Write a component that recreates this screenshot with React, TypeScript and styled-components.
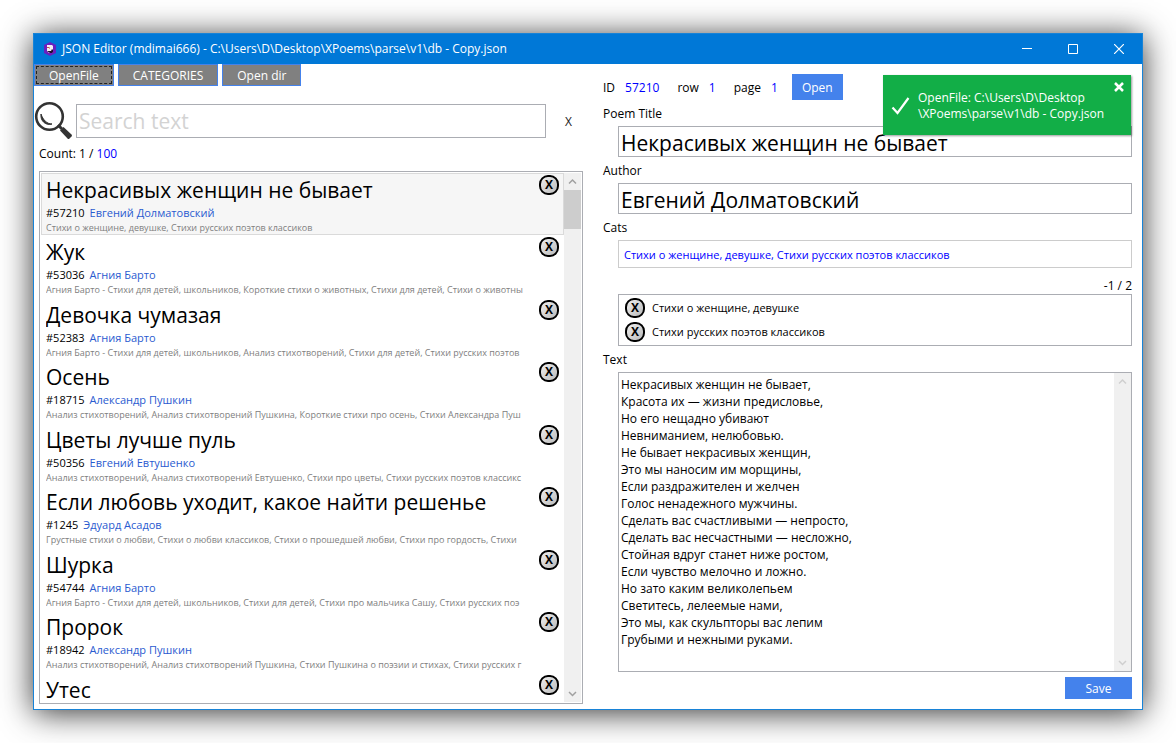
import React from 'react';
import styled, { createGlobalStyle } from 'styled-components';

const GlobalStyle = createGlobalStyle`
  *, *::before, *::after { box-sizing: border-box; }
  body { margin: 0; background: #fff; }
  body, button, input, textarea { font-family: "Open Sans", "Noto Sans", sans-serif; font-size: 12px; }
  button { padding: 0; cursor: pointer; }
`;

const Desktop = styled.div`
  display: flex;
  height: 100vh;
  min-height: 480px;
  padding: 33px;
`;

const Window = styled.main`
  position: relative;
  display: flex;
  flex: 1;
  flex-direction: column;
  min-width: 0;
  border: 1px solid #1883d7;
  background: #fff;
  color: #000;
  line-height: 16px;
  box-shadow: 0 3px 30px rgba(0, 0, 0, 0.8);
`;

const TitleBar = styled.header`
  display: flex;
  flex: none;
  align-items: center;
  height: 30px;
  padding-left: 9px;
  background: #0078d7;
  color: #fff;
`;

const WindowTitle = styled.h1`
  flex: 1;
  margin: 0 0 0 5px;
  font-size: 12px;
  font-weight: 400;
`;

const CaptionButton = styled.button`
  display: flex;
  align-items: center;
  justify-content: center;
  width: 46px;
  height: 30px;
  border: 0;
  background: none;
`;

const Content = styled.div`
  display: flex;
  flex: 1;
  gap: 20px;
  min-height: 0;
  padding-right: 10px;
`;

const LeftPane = styled.section`
  display: flex;
  flex: 549 1 0;
  flex-direction: column;
  min-width: 0;
  padding-bottom: 5px;
`;

const RightPane = styled.section`
  display: flex;
  flex: 529 1 0;
  flex-direction: column;
  min-width: 0;
  padding: 10px 0;
`;

const Toolbar = styled.div`
  display: flex;
  gap: 4px;
`;

const ToolButton = styled.button<{ $focused?: boolean }>`
  height: 22px;
  padding: 0 14px;
  border: 1px solid #4482ec;
  background: #808080;
  color: #fff;
  outline: ${(p) => (p.$focused ? '1px dashed #222' : 'none')};
  outline-offset: -3px;
`;

const SearchRow = styled.div`
  display: flex;
  align-items: center;
  gap: 2px;
  margin-top: 15px;
`;

const SearchInput = styled.input`
  flex: 1;
  min-width: 0;
  height: 34px;
  padding: 0 2px;
  border: 1px solid #abadb3;
  font-size: 21px;
  &::placeholder { color: #d3d3d3; opacity: 1; }
`;

const ClearButton = styled.button`
  width: 35px;
  height: 34px;
  padding-left: 6px;
  border: 0;
  background: none;
  color: #222;
`;

const Count = styled.p`
  margin: 5px 0 9px 5px;
`;

const Blue = styled.span`
  color: #0000ff;
`;

const ListFrame = styled.div`
  display: flex;
  flex: 1;
  min-height: 0;
  margin-left: 5px;
  padding: 1px;
  border: 1px solid #abadb3;
`;

const PoemList = styled.ul`
  flex: 1;
  min-width: 0;
  margin: 0;
  padding: 0;
  overflow: hidden;
  list-style: none;
`;

const PoemItem = styled.li<{ $selected?: boolean }>`
  display: flex;
  height: 62px;
  padding: 1px 4px;
  border: 1px solid ${(p) => (p.$selected ? '#dadada' : 'transparent')};
  background: ${(p) => (p.$selected ? '#f6f6f6' : 'transparent')};
  &:nth-child(even) { height: 63px; }
`;

const PoemInfo = styled.div`
  flex: 1;
  min-width: 0;
  overflow: hidden;
  white-space: nowrap;
`;

const PoemName = styled.div`
  font-size: 21px;
  line-height: 30px;
`;

const PoemMeta = styled.div`
  display: flex;
  gap: 5px;
  font-size: 11px;
  line-height: 16px;
`;

const AuthorName = styled.span`
  color: #2a5bd0;
`;

const PoemCats = styled.div`
  color: #808080;
  font-size: 9px;
  line-height: 13px;
`;

const RoundButton = styled.button`
  flex: none;
  width: 20px;
  height: 20px;
  border: 2px solid #000;
  border-radius: 9px;
  background: linear-gradient(135deg, #eee, #bbb);
  color: #000;
  font-weight: 700;
  line-height: 16px;
`;

const ScrollTrack = styled.div`
  display: flex;
  flex: none;
  flex-direction: column;
  justify-content: space-between;
  width: 17px;
  background: #f0f0f0;
`;

const ScrollThumb = styled.div`
  height: 39px;
  margin-bottom: auto;
  background: #cdcdcd;
`;

const InfoRow = styled.div`
  display: flex;
  align-items: center;
  height: 26px;
`;

const Pair = styled.span`
  display: flex;
  gap: 10px;
  margin-right: 18px;
  padding-top: 2px;
`;

const PrimaryButton = styled.button<{ $width: number; $height: number }>`
  width: ${(p) => p.$width}px;
  height: ${(p) => p.$height}px;
  border: 0;
  background: #4482ec;
  color: #fff;
`;

const InfoButton = styled(PrimaryButton)`
  margin-left: -4px;
`;

const Label = styled.label`
  display: block;
  margin: 6px 0 4px;
`;

const BigInput = styled.input`
  flex: none;
  height: 31px;
  margin: 0 0 0 15px;
  padding: 2px 2px 0;
  border: 1px solid #abadb3;
  font-size: 21px;
`;

const CatsInput = styled.input`
  flex: none;
  height: 28px;
  margin: 0 0 0 15px;
  padding: 0 5px;
  border: 1px solid #ccc;
  color: #0000ff;
  font-size: 11px;
`;

const Position = styled.p`
  margin: 10px 0 0;
  text-align: right;
`;

const CatList = styled.ul`
  flex: none;
  margin: 0 0 0 15px;
  padding: 1px 6px;
  border: 1px solid #abadb3;
  font-size: 11px;
  list-style: none;
`;

const CatItem = styled.li`
  display: flex;
  align-items: center;
  gap: 7px;
  height: 24px;
`;

const TextFrame = styled.div`
  display: flex;
  flex: 1;
  min-height: 0;
  margin: 0 0 5px 15px;
  border: 1px solid #abadb3;
`;

const PoemText = styled.textarea`
  flex: 1;
  min-width: 0;
  margin: 0;
  padding: 3px 2px;
  overflow: hidden;
  border: 0;
  line-height: 17px;
  resize: none;
`;

const Footer = styled.div`
  display: flex;
  flex: none;
  justify-content: flex-end;
`;

const Toast = styled.aside`
  position: absolute;
  top: 41px;
  right: 11px;
  display: flex;
  align-items: center;
  width: 248px;
  height: 60px;
  padding: 2px 0 0 8px;
  background: #12ae47;
  color: #fff;
  box-shadow: 1px 1px 2px rgba(0, 0, 0, 0.4);
`;

const ToastText = styled.p`
  margin: 0 0 0 8px;
`;

const ToastClose = styled.button`
  position: absolute;
  top: 7px;
  right: 7px;
  display: flex;
  border: 0;
  background: none;
`;

const AppIcon = () => (
  <svg width="14" height="14" viewBox="0 0 14 14" aria-hidden="true">
    <path d="M7 0l6 3v8l-6 3-6-3V3z" fill="#6a1fc0" />
    <path d="M4 3h5l1 1v5l-1 2H6L4 9z" fill="#f4eef4" />
    <path d="M9 7l1 1v2l-1 1H7l-3-2h4z" fill="#1c0b30" />
    <path d="M4 5h2v1H4z" fill="#c84a5a" />
    <path d="M6 5h1v2H6z" fill="#d9a890" />
  </svg>
);

const Magnifier = () => (
  <svg width="40" height="40" viewBox="0 0 40 40" aria-hidden="true">
    <circle cx="15.500" cy="15.500" r="13.300" fill="none" stroke="#333" strokeWidth="2.600" />
    <path d="M7 13c-1 7 5 12 11 10-5 0-9-4-11-10z" fill="#333" stroke="#333" strokeWidth="1" />
    <path d="M24 24l4 4" stroke="#333" strokeWidth="3" />
    <path d="M26 29.500l3.500-3.500 8 7.500q1 1 0 2l-2 2q-1 1-2 0z" fill="#333" />
  </svg>
);

const ScrollArrow = ({ down, color }: { down?: boolean; color: string }) => (
  <svg width="17" height="17" viewBox="0 0 17 17" aria-hidden="true">
    <path d={down ? 'M5 7l3.500 3.500L12 7' : 'M5 10.500L8.500 7l3.500 3.500'} fill="none" stroke={color} strokeWidth="1.500" />
  </svg>
);

const poems = [
  { id: 57210, title: 'Некрасивых женщин не бывает', author: 'Евгений Долматовский', cats: 'Стихи о женщине, девушке, Стихи русских поэтов классиков' },
  { id: 53036, title: 'Жук', author: 'Агния Барто', cats: 'Агния Барто - Стихи для детей, школьников, Короткие стихи о животных, Стихи для детей, Стихи о животны' },
  { id: 52383, title: 'Девочка чумазая', author: 'Агния Барто', cats: 'Агния Барто - Стихи для детей, школьников, Анализ стихотворений, Стихи для детей, Стихи русских поэтов' },
  { id: 18715, title: 'Осень', author: 'Александр Пушкин', cats: 'Анализ стихотворений, Анализ стихотворений Пушкина, Короткие стихи про осень, Стихи Александра Пуш' },
  { id: 50356, title: 'Цветы лучше пуль', author: 'Евгений Евтушенко', cats: 'Анализ стихотворений, Анализ стихотворений Евтушенко, Стихи про цветы, Стихи русских поэтов классикс' },
  { id: 1245, title: 'Если любовь уходит, какое найти решенье', author: 'Эдуард Асадов', cats: 'Грустные стихи о любви, Стихи о любви классиков, Стихи о прошедшей любви, Стихи про гордость, Стихи' },
  { id: 54744, title: 'Шурка', author: 'Агния Барто', cats: 'Агния Барто - Стихи для детей, школьников, Стихи для детей, Стихи про мальчика Сашу, Стихи русских поэ' },
  { id: 18942, title: 'Пророк', author: 'Александр Пушкин', cats: 'Анализ стихотворений, Анализ стихотворений Пушкина, Стихи Пушкина о поэзии и стихах, Стихи русских г' },
  { id: 0, title: 'Утес', author: '', cats: '' },
];

const poemText = `Некрасивых женщин не бывает,
Красота их — жизни предисловье,
Но его нещадно убивают
Невниманием, нелюбовью.
Не бывает некрасивых женщин,
Это мы наносим им морщины,
Если раздражителен и желчен
Голос ненадежного мужчины.
Сделать вас счастливыми — непросто,
Сделать вас несчастными — несложно,
Стойная вдруг станет ниже ростом,
Если чувство мелочно и ложно.
Но зато каким великолепьем
Светитесь, лелеемые нами,
Это мы, как скульпторы вас лепим
Грубыми и нежными руками.`;

export default function App() {
  return (
    <Desktop>
      <GlobalStyle />
      <Window>
        <TitleBar>
          <AppIcon />
          <WindowTitle>JSON Editor (mdimai666) - C:\Users\D\Desktop\XPoems\parse\v1\db - Copy.json</WindowTitle>
          <CaptionButton aria-label="Minimize">
            <svg width="10" height="10"><path d="M0 4.500h10" stroke="#fff" /></svg>
          </CaptionButton>
          <CaptionButton aria-label="Maximize">
            <svg width="10" height="10"><path d="M.5.5h9v9h-9z" fill="none" stroke="#fff" /></svg>
          </CaptionButton>
          <CaptionButton aria-label="Close">
            <svg width="10" height="10"><path d="M0 0l10 10M10 0L0 10" stroke="#fff" strokeWidth="1.200" /></svg>
          </CaptionButton>
        </TitleBar>
        <Content>
          <LeftPane>
            <Toolbar>
              <ToolButton $focused>OpenFile</ToolButton>
              <ToolButton>CATEGORIES</ToolButton>
              <ToolButton>Open dir</ToolButton>
            </Toolbar>
            <SearchRow>
              <Magnifier />
              <SearchInput aria-label="Search text" placeholder="Search text" />
              <ClearButton aria-label="Clear search">X</ClearButton>
            </SearchRow>
            <Count>Count: 1 / <Blue>100</Blue></Count>
            <ListFrame>
              <PoemList>
                {poems.map((p, i) => (
                  <PoemItem key={p.title} $selected={i === 0}>
                    <PoemInfo>
                      <PoemName>{p.title}</PoemName>
                      {p.author && (
                        <>
                          <PoemMeta>
                            <span>#{p.id}</span>
                            <AuthorName>{p.author}</AuthorName>
                          </PoemMeta>
                          <PoemCats>{p.cats}</PoemCats>
                        </>
                      )}
                    </PoemInfo>
                    <RoundButton>X</RoundButton>
                  </PoemItem>
                ))}
              </PoemList>
              <ScrollTrack>
                <ScrollArrow color="#a0a0a0" />
                <ScrollThumb />
                <ScrollArrow down color="#a0a0a0" />
              </ScrollTrack>
            </ListFrame>
          </LeftPane>
          <RightPane>
            <InfoRow>
              <Pair>ID <Blue>57210</Blue></Pair>
              <Pair>row <Blue>1</Blue></Pair>
              <Pair>page <Blue>1</Blue></Pair>
              <InfoButton $width={51} $height={26}>Open</InfoButton>
            </InfoRow>
            <Label htmlFor="title">Poem Title</Label>
            <BigInput id="title" defaultValue="Некрасивых женщин не бывает" />
            <Label htmlFor="author">Author</Label>
            <BigInput id="author" defaultValue="Евгений Долматовский" />
            <Label htmlFor="cats">Cats</Label>
            <CatsInput id="cats" defaultValue="Стихи о женщине, девушке, Стихи русских поэтов классиков" />
            <Position>-1 / 2</Position>
            <CatList>
              <CatItem><RoundButton>X</RoundButton>Стихи о женщине, девушке</CatItem>
              <CatItem><RoundButton>X</RoundButton>Стихи русских поэтов классиков</CatItem>
            </CatList>
            <Label htmlFor="text">Text</Label>
            <TextFrame>
              <PoemText id="text" defaultValue={poemText} />
              <ScrollTrack>
                <ScrollArrow color="#cfcfcf" />
                <ScrollArrow down color="#cfcfcf" />
              </ScrollTrack>
            </TextFrame>
            <Footer>
              <PrimaryButton $width={67} $height={22}>Save</PrimaryButton>
            </Footer>
          </RightPane>
        </Content>
        <Toast role="status">
          <svg width="19" height="20" viewBox="0 0 19 20" aria-hidden="true">
            <path d="M1.500 11.500l5 5.500L17.500 2" fill="none" stroke="#fff" strokeWidth="2.200" />
          </svg>
          <ToastText>OpenFile: C:\Users\D\Desktop<br />\XPoems\parse\v1\db - Copy.json</ToastText>
          <ToastClose aria-label="Dismiss">
            <svg width="10" height="10"><path d="M1 1l8 8M9 1L1 9" stroke="#fff" strokeWidth="2.500" /></svg>
          </ToastClose>
        </Toast>
      </Window>
    </Desktop>
  );
}
